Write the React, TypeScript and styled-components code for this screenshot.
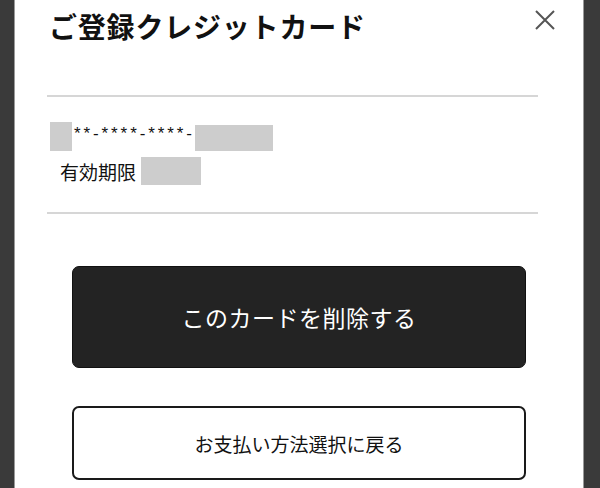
import React from "react";
import styled, { createGlobalStyle } from "styled-components";

const Global = createGlobalStyle`
  html, body { margin: 0; padding: 0; }
  body {
    background: #3a3a3a;
    font-family: "Noto Sans CJK JP", "Noto Sans", sans-serif;
    color: #111;
  }
`;

const Screen = styled.div`
  width: 600px;
  height: 488px;
  display: flex;
  background: #3a3a3a;
  overflow: hidden;
`;

const Panel = styled.div`
  margin-left: 14px;
  width: 568px;
  height: 488px;
  background: #fff;
  border-left: 1px solid #9a9a9a;
  border-right: 1px solid #9a9a9a;
  position: relative;
  display: flex;
  flex-direction: column;
`;

const Header = styled.div`
  padding: 10px 0 0 34px;
  height: 95px;
  box-sizing: border-box;
`;

const Title = styled.h1`
  margin: 0;
  font-size: 28px;
  line-height: 1.2;
  font-weight: 700;
  letter-spacing: 0.8px;
  color: #111;
`;

const Close = styled.button`
  position: absolute;
  top: 8px;
  right: 26px;
  width: 24px;
  height: 24px;
  padding: 0;
  border: none;
  background: transparent;
  display: flex;
  align-items: center;
  justify-content: center;
`;

const Divider = styled.hr`
  margin: 0 45px 0 32px;
  border: none;
  height: 2px;
  background: #d6d6d6;
`;

const CardInfo = styled.div`
  padding: 25px 0 0 35px;
  height: 115px;
  box-sizing: border-box;
  display: flex;
  flex-direction: column;
  gap: 6px;
`;

const NumberRow = styled.div`
  display: flex;
  align-items: flex-end;
  height: 29px;
  font-family: "Liberation Sans", sans-serif;
  font-size: 17px;
  letter-spacing: 2.9px;
`;

const Mask = styled.span<{ $w: number; $h: number }>`
  display: inline-block;
  width: ${(p) => p.$w}px;
  height: ${(p) => p.$h}px;
  background: #cdcdcd;
`;

const Stars = styled.span`
  padding: 0 0 0 2px;
  line-height: 17px;
  margin-bottom: 9px;
`;

const ExpiryRow = styled.div`
  display: flex;
  align-items: center;
  gap: 5px;
  padding-left: 10px;
  font-size: 19px;
  height: 28px;
`;

const Actions = styled.div`
  padding: 52px 0 0 57px;
  display: flex;
  flex-direction: column;
  gap: 38px;
`;

const Button = styled.button<{ $primary?: boolean }>`
  width: 454px;
  box-sizing: border-box;
  font-family: "Noto Sans CJK JP", "Noto Sans", sans-serif;
  cursor: pointer;
  display: flex;
  align-items: center;
  justify-content: center;
  border-radius: 7px;
  padding: 0;
  height: ${(p) => (p.$primary ? 102 : 74)}px;
  font-size: ${(p) => (p.$primary ? 23 : 19)}px;
  letter-spacing: ${(p) => (p.$primary ? 0.5 : 0)}px;
  background: ${(p) => (p.$primary ? "#232323" : "#fff")};
  color: ${(p) => (p.$primary ? "#fff" : "#111")};
  border: ${(p) => (p.$primary ? "1px solid #111" : "2px solid #1a1a1a")};
`;

export default function App() {
  return (
    <>
      <Global />
      <Screen>
        <Panel>
          <Header>
            <Title>ご登録クレジットカード</Title>
          </Header>
          <Close aria-label="閉じる">
            <svg width="22" height="22" viewBox="0 0 22 22">
              <path d="M2 2 L20 20 M20 2 L2 20" stroke="#555" strokeWidth="2" fill="none" />
            </svg>
          </Close>
          <Divider />
          <CardInfo>
            <NumberRow>
              <Mask $w={22} $h={29} />
              <Stars>**-****-****-</Stars>
              <Mask $w={78} $h={26} />
            </NumberRow>
            <ExpiryRow>
              有効期限
              <Mask $w={60} $h={28} />
            </ExpiryRow>
          </CardInfo>
          <Divider />
          <Actions>
            <Button $primary>このカードを削除する</Button>
            <Button>お支払い方法選択に戻る</Button>
          </Actions>
        </Panel>
      </Screen>
    </>
  );
}
